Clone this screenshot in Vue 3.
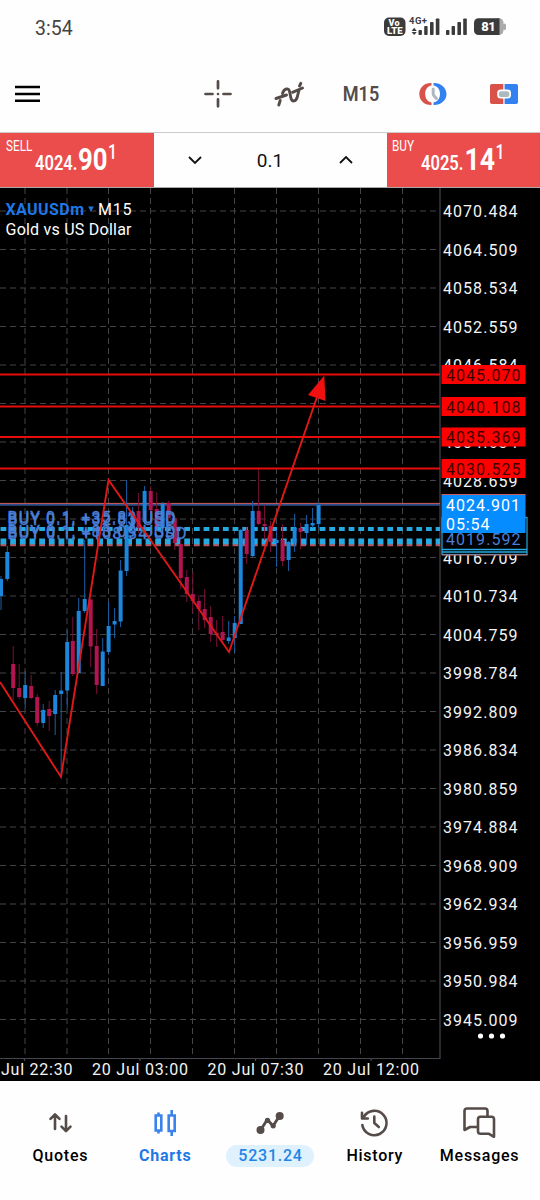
<script setup>
import { ref } from 'vue'

const volume = ref(0.1)
const activeTab = ref('Charts')

// Grid
const columns = [25, 67, 108.5, 150.5, 192.5, 234.5, 276.5, 318.5, 360.5, 402.5]
const rows = Array.from({ length: 22 }, (_, i) => rowY(i))
const prices = [
  '4070.484', '4064.509', '4058.534', '4052.559', '4046.584', null, '4034.634', '4028.659',
  null, '4016.709', '4010.734', '4004.759', '3998.784', '3992.809', '3986.834', '3980.859',
  '3974.884', '3968.909', '3962.934', '3956.959', '3950.984', '3945.009'
]
  .map((text, i) => ({ text, y: rowY(i) + 6 }))
  .filter((p) => p.text)

function rowY(i) {
  return 211 + i * 38.5
}

const times = [
  { text: 'Jul 22:30', x: 1, w: 71.5 },
  { text: '20 Jul 03:00', x: 92, w: 96 },
  { text: '20 Jul 07:30', x: 207.5, w: 96 },
  { text: '20 Jul 12:00', x: 323, w: 96 }
]

const levels = [
  { price: '4045.070', y: 374.5 },
  { price: '4040.108', y: 406.5 },
  { price: '4035.369', y: 437 },
  { price: '4030.525', y: 468.5 }
]

const deals = [
  { text: 'BUY 0.1, +35.81 USD', y: 523.3, w: 168 },
  { text: 'BUY 0.1, +32.83 USD', y: 525, w: 168 },
  { text: 'BUY 0.1, +83.09 USD', y: 536.5, w: 168 },
  { text: 'BUY 0.1, +108.34 USD', y: 538.5, w: 179 }
]

// [x, body top, body bottom, wick top, wick bottom, up]
const candles = [
  [1, 579, 596, 576, 610, 1],
  [7.3, 552, 579, 546, 581, 1],
  [13.2, 664, 688, 646, 700, 0],
  [19.2, 688, 697, 664, 699, 0],
  [25.2, 685, 698, 671, 708, 1],
  [31.2, 686, 698, 675, 699, 0],
  [37.2, 697, 723, 694, 726, 0],
  [43.2, 710, 723, 704, 728, 1],
  [49.2, 709, 716, 701, 731, 0],
  [55.2, 695, 714, 690, 735, 1],
  [61.2, 690.5, 694, 672, 776, 1],
  [67.2, 642, 690.5, 630, 708, 1],
  [72.8, 641, 674, 617, 676, 0],
  [78.7, 611, 673, 598, 674, 1],
  [84.7, 599, 611, 540, 613, 1],
  [90.7, 599.5, 646.5, 599, 667, 0],
  [96.7, 646, 685, 629, 694, 0],
  [102.7, 651.5, 686, 638, 686, 1],
  [108.6, 626, 652, 602, 655, 1],
  [114.6, 621, 624.5, 608, 638, 1],
  [120.6, 570.5, 621.5, 560, 627, 1],
  [126.6, 525, 571, 480, 576, 1],
  [132.6, 512, 527, 507, 535, 1],
  [138.6, 511, 528, 493, 533, 0],
  [144.6, 491, 522, 486, 524, 1],
  [150.7, 491, 510, 486, 513, 0],
  [156.7, 509, 527, 492, 531, 0],
  [162.7, 504, 528, 502, 530, 1],
  [168.7, 503, 518, 501, 522, 0],
  [174.8, 518, 543, 516, 550, 0],
  [180.8, 544, 578, 540, 589, 0],
  [186.8, 577, 594, 570, 602, 0],
  [192.8, 594, 601, 572, 613, 0],
  [198.8, 601, 609, 595, 630, 0],
  [204.7, 609, 620, 589, 628, 0],
  [210.7, 617, 634, 606, 642, 0],
  [216.7, 633, 635, 620, 647, 0],
  [222.7, 632, 640, 616, 642, 0],
  [228.7, 637.5, 641, 621, 644, 1],
  [234.7, 623, 638, 616, 653, 1],
  [240.7, 530, 624, 529, 624, 1],
  [246.7, 530, 554, 527, 564, 0],
  [252.7, 511, 556, 501, 557, 1],
  [258.7, 511, 524, 469, 525, 0],
  [264.6, 524, 526, 505, 540, 0],
  [270.6, 526, 542, 521, 552, 0],
  [276.6, 540, 543, 530, 567, 1],
  [282.6, 540, 561, 524, 566, 0],
  [288.6, 542, 560, 541, 571, 1],
  [294.6, 528, 543, 514, 552, 1],
  [300.6, 528, 532, 523, 549, 0],
  [306.6, 524, 533, 515, 545, 1],
  [312.6, 523, 525.5, 508, 528, 1],
  [318.6, 505, 524, 503, 528, 1]
]
</script>

<template>
  <div class="screen">
    <header class="status">
      <span class="clock">3:54</span>
      <svg class="status-icons" width="126" height="24" viewBox="382 15 126 24">
        <rect x="384" y="17.5" width="21.5" height="18.5" rx="5" fill="#3b3b3b" />
        <g fill="#fff" font-weight="900" font-size="9">
          <text x="388.5" y="26" textLength="11">Vo</text>
          <text x="387" y="34.3" textLength="15.5" lengthAdjust="spacingAndGlyphs">LTE</text>
        </g>
        <text x="409" y="24.2" font-size="9.5" font-weight="700" fill="#3b3b3b" textLength="18">4G+</text>
        <g fill="#3b3b3b">
          <path d="M414.2 27.8l2.6 3.1h-5.2zM414.2 35l2.6-3.1h-5.2z" />
          <rect x="418.5" y="30" width="3.4" height="5" rx=".8" />
          <rect x="424.2" y="26" width="3.4" height="9" rx=".8" />
          <rect x="430" y="22" width="3.6" height="13" rx=".8" />
          <rect x="435.8" y="18.5" width="3.6" height="16.5" rx=".8" />
          <rect x="446" y="30" width="3.4" height="5" rx=".8" />
          <rect x="451.6" y="26" width="3.4" height="9" rx=".8" />
          <rect x="457.4" y="22" width="3.6" height="13" rx=".8" />
          <rect x="463.2" y="18.5" width="3.6" height="16.5" rx=".8" />
        </g>
        <rect x="494" y="18.3" width="9.5" height="16.7" rx="4.5" fill="#aaa" />
        <rect x="503" y="23.5" width="3" height="6.5" rx="1.5" fill="#aaa" />
        <path d="M478.5 18.3h21v16.7h-21a4.5 4.5 0 0 1-4.5-4.5v-7.7a4.5 4.5 0 0 1 4.5-4.5z" fill="#3b3b3b" />
        <text x="481.3" y="31.4" font-size="13" font-weight="800" fill="#fff" textLength="14.5">81</text>
      </svg>
    </header>

    <nav class="toolbar">
      <svg width="26" height="20" viewBox="15 84 26 20" stroke="#000" stroke-width="2.6">
        <path d="M15 87h25M15 94h25M15 100.8h25" />
      </svg>
      <div class="tools">
        <svg width="30" height="30" viewBox="203 79 30 30" fill="none" stroke="#554b49" stroke-width="2.7" stroke-linecap="round">
          <path d="M218 81.300v7M218 99.300v7M205.500 94h7M223.500 94h7" />
          <circle cx="218" cy="94" r="1.3" fill="#554b49" stroke="none" />
        </svg>
        <svg width="32" height="30" viewBox="271.5 79 32 30" fill="none" stroke="#554b49" stroke-width="2.9" stroke-linecap="round">
          <path d="M278.300 105l1.400-4.500M282 93.500c1.500-5 6.300-6.500 7.200-1.500l1.200 6c1 4.500 5 3.500 6.200-.5l1.800-7M299 86l1.300-2.700" />
          <path d="M275.500 98.500l10.500-3.500M292 92.300l10-4.300" />
        </svg>
        <svg class="period" width="40" height="24" viewBox="342 82 40 24">
          <text x="342.8" y="101" textLength="36.5" lengthAdjust="spacingAndGlyphs">M15</text>
        </svg>
        <svg width="30" height="26" viewBox="420.5 81 30 26" fill="none">
          <path d="M431 83c-7-.3-12.200 4.500-12.200 11s5.200 11.300 12.200 11v-2.600c-4-.6-6.300-4-6.300-8.400s2.300-7.800 6.300-8.400z" fill="#d9524a" />
          <path d="M433 83c7-.3 13 4.500 13 11s-6 11.300-13 11v-2.600c4.100-.6 6.500-4 6.500-8.400s-2.400-7.800-6.500-8.400z" fill="#3181f0" />
          <path d="M432.700 89v4.500q0 1.500 1 2.500l2.200 2.500" stroke="#adb9bf" stroke-width="3" stroke-linecap="round" />
        </svg>
        <svg width="30" height="24" viewBox="489 82 30 24">
          <path d="M492 84h11.300v20H492q-2 0-2-2V86q0-2 2-2z" fill="#d9524a" />
          <path d="M504.600 84H516q2 0 2 2v16q0 2-2 2h-11.400z" fill="#3181f0" />
          <rect x="497.2" y="89.6" width="13.8" height="9" rx="3.5" fill="#fff" />
          <rect x="498.8" y="91.2" width="10.6" height="5.8" rx="2.5" fill="#adb9bf" />
        </svg>
      </div>
    </nav>

    <section class="trade">
      <button class="side sell">
        <span class="side-name">SELL</span>
        <svg width="90" height="38" viewBox="32 139 90 38">
          <text x="35" y="170" class="int" textLength="42.5" lengthAdjust="spacingAndGlyphs">4024.</text>
          <text x="78" y="170" class="pips" textLength="29.5" lengthAdjust="spacingAndGlyphs">90</text>
          <text x="108" y="158.5" class="tick" textLength="9" lengthAdjust="spacingAndGlyphs">1</text>
        </svg>
      </button>
      <div class="volume">
        <button class="step" @click="volume = Math.max(0.1, +(volume - 0.1).toFixed(1))">
          <svg width="16" height="10" viewBox="0 0 16 10"><path d="M2 2l6 6 6-6" /></svg>
        </button>
        <span>{{ volume }}</span>
        <button class="step" @click="volume = +(volume + 0.1).toFixed(1)">
          <svg width="16" height="10" viewBox="0 0 16 10"><path d="M2 8l6-6 6 6" /></svg>
        </button>
      </div>
      <button class="side buy">
        <span class="side-name">BUY</span>
        <svg width="90" height="38" viewBox="418 139 90 38">
          <text x="421" y="170" class="int" textLength="42.5" lengthAdjust="spacingAndGlyphs">4025.</text>
          <text x="464.5" y="170" class="pips" textLength="30.5" lengthAdjust="spacingAndGlyphs">14</text>
          <text x="495.5" y="158.5" class="tick" textLength="9" lengthAdjust="spacingAndGlyphs">1</text>
        </svg>
      </button>
    </section>

    <svg class="chart" width="540" height="893" viewBox="0 188 540 893">
      <g class="grid">
        <line v-for="x in columns" :key="x" :x1="x" y1="188" :x2="x" y2="1058" />
        <line v-for="y in rows" :key="y" x1="0" :y1="y" x2="440" :y2="y" />
      </g>
      <path d="M440 188v870.5H0M24.500 1058v3M140 1058v3M255.500 1058v3M371 1058v3" class="axis" />

      <!-- deals under the candles -->
      <g class="deal-lines">
        <line x1="0.5" y1="545" x2="440" y2="545" stroke="#b5555a" stroke-width="2.5" />
        <line x1="0.5" y1="529" x2="440" y2="529" stroke-width="4.2" />
        <line x1="0.5" y1="541.3" x2="440" y2="541.3" stroke-width="5.8" />
      </g>
      <line x1="0" y1="504.7" x2="440" y2="504.7" stroke="#2b4f8c" stroke-width="2" />
      <line x1="0" y1="503.4" x2="440" y2="503.4" stroke="#d2605c" stroke-width="1" />

      <g v-for="c in candles" :key="c[0]" :class="c[5] ? 'up' : 'down'">
        <line :x1="c[0]" :y1="c[3]" :x2="c[0]" :y2="c[4]" />
        <rect :x="c[0] - 2" :y="c[1]" width="4" :height="c[2] - c[1]" />
      </g>

      <g class="deals">
        <text v-for="d in deals" :key="d.text" x="7.5" :y="d.y" :textLength="d.w">{{ d.text }}</text>
      </g>

      <line v-for="l in levels" :key="l.price" x1="0" :y1="l.y" x2="440" :y2="l.y" class="level" />
      <path d="M0 682L61 777L108.500 480L229 652L317 397" class="trend" />
      <path d="M324.300 375.500L308 395L325.500 401z" fill="#f01010" />

      <g class="labels">
        <text v-for="p in prices" :key="p.text" x="443" :y="p.y" textLength="74.5">{{ p.text }}</text>
        <text v-for="t in times" :key="t.text" :x="t.x" y="1075.3" :textLength="t.w">{{ t.text }}</text>
      </g>
      <g v-for="l in levels" :key="l.price">
        <rect x="441.5" :y="l.y - 9.5" width="84" height="19" fill="#f00" />
        <text x="446" :y="l.y + 6" textLength="74.5" fill="#400000">{{ l.price }}</text>
      </g>

      <rect x="442" y="517.5" width="85" height="37" fill="#000" stroke="#25a9e0" stroke-width="1.2" />
      <text x="446" y="545.3" textLength="74.5" fill="#4a7fd8">4019.592</text>
      <path d="M442 549.500h85M442 552h85" stroke="#25a9e0" stroke-width="1.5" />
      <path d="M442 555h85.500" stroke="#c9605c" stroke-width="1" />
      <rect x="441.5" y="494.5" width="84" height="38.5" fill="#058dff" />
      <path d="M441.500 494.500h84" stroke="#c9605c" stroke-width="1" />
      <text x="446" y="511" textLength="74" fill="#fff">4024.901</text>
      <text x="446" y="530" textLength="43.5" fill="#fff">05:54</text>

      <text x="5.5" y="214.8" textLength="78.5" class="symbol">XAUUSDm</text>
      <path d="M88.200 206.500h5.600l-2.800 5.200z" fill="#1f78e8" />
      <text x="98" y="214.8" textLength="33.5" fill="#fff">M15</text>
      <text x="5.5" y="235" textLength="126" fill="#fff">Gold vs US Dollar</text>
      <g fill="#fff">
        <circle cx="480.5" cy="1036" r="2.6" />
        <circle cx="491.5" cy="1036" r="2.6" />
        <circle cx="502.5" cy="1036" r="2.6" />
      </g>
    </svg>

    <footer class="tabs">
      <button class="tab" @click="activeTab = 'Quotes'">
        <svg width="36" height="36" viewBox="0 0 36 36" class="icon">
          <path d="M13 25V11M8.500 14.800l4.500-4.500 4.500 4.500M24 12v14.500M19.500 22.700l4.500 4.500 4.500-4.500" />
        </svg>
        <span>Quotes</span>
      </button>
      <button class="tab" :class="{ active: activeTab === 'Charts' }" @click="activeTab = 'Charts'">
        <svg width="36" height="36" viewBox="0 0 36 36" fill="none" stroke="#3b82ec" stroke-width="2.6">
          <path d="M8.700 11.500h5.600v15H8.700zM21.700 11.500h6v15.500h-6zM11.500 8.500v3M11.500 26.500v3M24.700 6v5.500M24.700 27v5" />
        </svg>
        <span>Charts</span>
      </button>
      <button class="tab" @click="activeTab = 'Trade'">
        <svg width="36" height="36" viewBox="0 0 36 36" class="icon">
          <path d="M9 25.500l6.300-10 5.700 6.500 6.500-10" stroke-width="2.8" />
          <g fill="#554b49" stroke="none">
            <circle cx="8.500" cy="26" r="4" />
            <circle cx="15.500" cy="16.300" r="2.600" />
            <circle cx="21.200" cy="21.800" r="2.600" />
            <circle cx="27.700" cy="12" r="4" />
          </g>
        </svg>
        <span class="badge">5231.24</span>
      </button>
      <button class="tab" @click="activeTab = 'History'">
        <svg width="36" height="36" viewBox="0 0 36 36" class="icon">
          <path d="M5.300 21a12.200 12.200 0 1 0 1.600-8.300M5 8.700v5.800h5.800M17.300 12.500V19l4.500 4" />
        </svg>
        <span>History</span>
      </button>
      <button class="tab" @click="activeTab = 'Messages'">
        <svg width="36" height="36" viewBox="0 0 36 36" class="icon">
          <path d="M15 23H8L2.500 26V7q0-2.500 2.500-2.500h18q2.500 0 2.500 2.500v5.500" />
          <path d="M18.500 12.800h11q2.500 0 2.500 2.500V32.800l-5-3h-8.500q-2.500 0-2.500-2.500V15.300q0-2.500 2.500-2.500z" />
        </svg>
        <span>Messages</span>
      </button>
    </footer>
  </div>
</template>

<style>
body {
  margin: 0;
  background: #fefefe;
}
</style>

<style scoped>
.screen {
  width: 540px;
  height: 1200px;
  display: flex;
  flex-direction: column;
  background: #fefefe;
  font-family: Roboto, "Liberation Sans", sans-serif;
  overflow: hidden;
}

svg {
  display: block;
  flex: none;
}

button {
  margin: 0;
  padding: 0;
  border: none;
  background: none;
  font-family: inherit;
  color: inherit;
  cursor: pointer;
}

.status {
  height: 54px;
  display: flex;
  justify-content: space-between;
  box-sizing: border-box;
  padding: 15px 32px 0 35px;
}

.clock {
  font-size: 19.5px;
  line-height: 27px;
  color: #444;
}

.toolbar {
  height: 78px;
  display: flex;
  align-items: center;
  justify-content: space-between;
  box-sizing: border-box;
  padding: 2px 21px 0 15px;
}

.tools {
  display: flex;
  align-items: center;
  justify-content: space-between;
  width: 316px;
}

.tools svg {
  overflow: visible;
}

.period text {
  font-size: 20.5px;
  font-weight: 600;
  fill: #554b49;
}

.trade {
  height: 56px;
  display: flex;
  box-sizing: border-box;
  border-top: 1px solid #ccc;
  border-bottom: 1px solid #a9a9a9;
}

.side {
  width: 153.5px;
  display: flex;
  align-items: flex-start;
  background: #ea4d4c;
  color: #fff;
}

.side-name {
  width: 26px;
  margin: 5px 0 0 5.5px;
  font-size: 14px;
  line-height: 17px;
  text-align: left;
  transform: scaleX(0.84);
  transform-origin: left;
}

.side svg {
  margin-top: 6px;
  overflow: visible;
}

.side text {
  fill: #fff;
}

.int {
  font-size: 20px;
  font-weight: 600;
}

.pips {
  font-size: 31px;
  font-weight: 700;
}

.tick {
  font-size: 20px;
  font-weight: 500;
}

.volume {
  flex: 1;
  display: flex;
  align-items: center;
  justify-content: space-between;
  padding: 0 33px;
  font-size: 19px;
  color: #111;
}

.step svg {
  fill: none;
  stroke: #111;
  stroke-width: 1.8;
}

.chart {
  background: #000;
  font-size: 16px;
}

.grid line {
  stroke: #444448;
  stroke-width: 1;
  stroke-dasharray: 6 4;
}

.axis {
  fill: none;
  stroke: #45454f;
  stroke-width: 1.2;
}

.deal-lines line {
  stroke-dasharray: 5.8 3.87;
}

.deal-lines line:not([stroke]) {
  stroke: #25a9e0;
}

.up line {
  stroke: #1c5fa8;
}

.up rect {
  fill: #1c86dc;
}

.down line {
  stroke: #7a1238;
}

.down rect {
  fill: #b01550;
}

.deals text {
  fill: #4a7fd8;
  stroke: #4a7fd8;
  stroke-width: 0.35;
}

.level {
  stroke: #e80c0c;
  stroke-width: 2;
}

.trend {
  fill: none;
  stroke: #e01818;
  stroke-width: 1.9;
}

.labels text {
  fill: #f4f4f4;
}

.symbol {
  fill: #1f78e8;
  font-weight: 700;
}

.tabs {
  flex: 1;
  display: flex;
  align-items: flex-start;
  padding: 23px 8px 0 8px;
}

.tab {
  flex: 1;
  display: flex;
  flex-direction: column;
  align-items: center;
  gap: 5px;
  font-size: 16px;
  font-weight: 500;
  letter-spacing: 0.75px;
  line-height: 22px;
  color: #000;
}

.tab.active {
  color: #1f78e8;
  font-weight: 700;
}

.icon {
  fill: none;
  stroke: #554b49;
  stroke-width: 2.6;
  stroke-linecap: round;
  stroke-linejoin: round;
}

.badge {
  padding: 0 11px 0 12px;
  border-radius: 11px;
  background: #dff1fc;
  color: #1f85e8;
}
</style>
